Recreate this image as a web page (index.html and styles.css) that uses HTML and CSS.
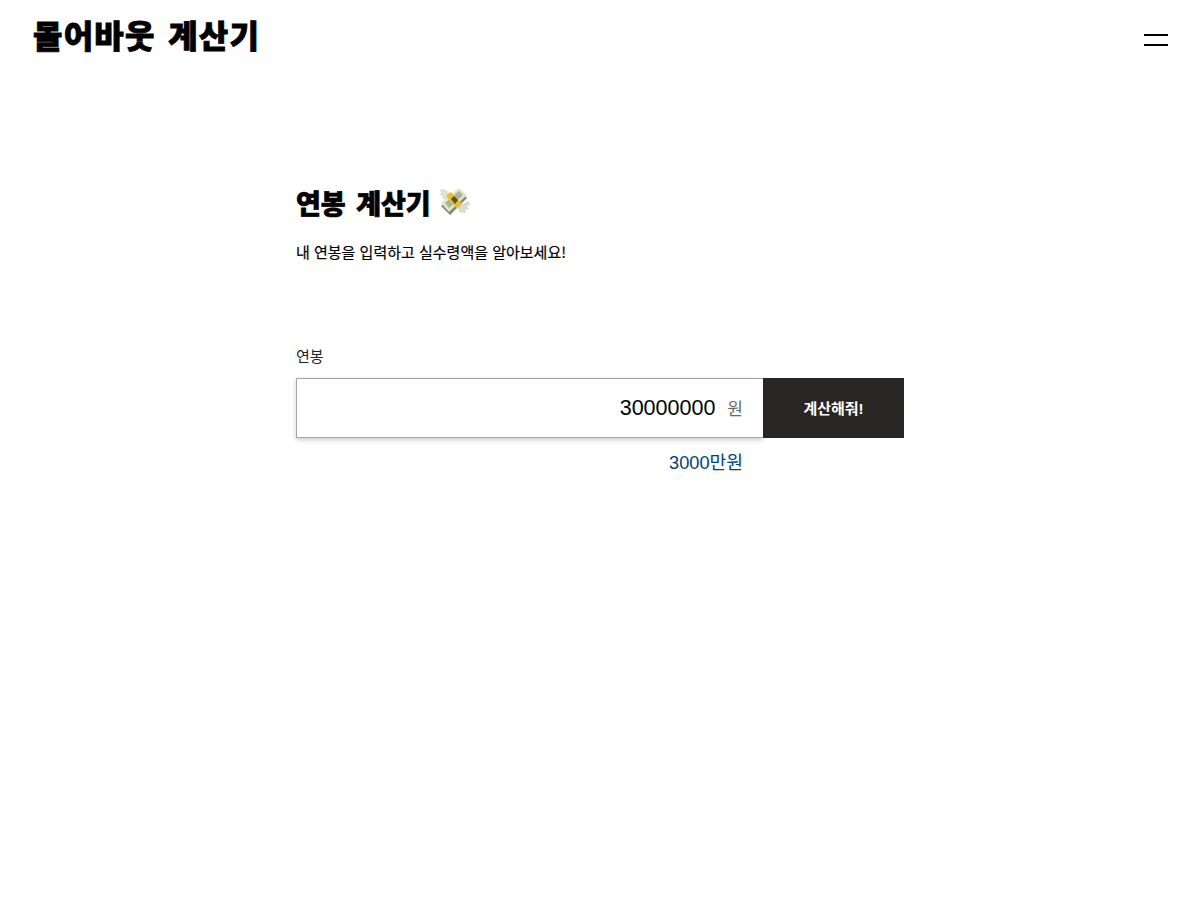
FILE: index.html
```html
<!DOCTYPE html>
<html lang="ko">
<head>
    <meta charset="UTF-8">
    <title>몰어바웃 계산기</title>
    <link rel="stylesheet" href="styles.css">
</head>
<body>
    <header class="site-header">
        <div class="logo">몰어바웃 계산기</div>
        <button class="menu-btn" aria-label="메뉴">
            <span class="menu-line"></span>
            <span class="menu-line"></span>
        </button>
    </header>

    <main class="calculator">
        <h1 class="calc-title">
            연봉 계산기
            <svg class="money-icon" viewBox="0 0 32 32" aria-hidden="true">
                <!-- wings -->
                <path d="M15 9 L6 3 L1 4 L4 7 L1 8 L5 11 L3 12 L10 15 Z" fill="#dfe2d6"/>
                <path d="M20 20 L31 15 L32 19 L29 20 L31 23 L27 24 L28 27 L21 26 Z" fill="#d8dbcc"/>
                <!-- bills -->
                <path d="M3 20 L22 5 L29 12 L12 29 Z" fill="#7f8a70"/>
                <path d="M3 17 L21 2 L29 9 L11 26 Z" fill="#dfe4cc"/>
                <path d="M7 17 L21 5 L25 9 L11 22 Z" fill="#a9b690"/>
                <!-- paper band -->
                <path d="M8 10 L13 6 L24 18 L19 23 Z" fill="#e8bb3a"/>
                <path d="M13 13 L16 10 L20 14 L17 18 Z" fill="#5f5120"/>
            </svg>
        </h1>
        <p class="calc-desc">내 연봉을 입력하고 실수령액을 알아보세요!</p>

        <form class="calc-form">
            <label class="field-label" for="salary">연봉</label>
            <div class="input-row">
                <div class="input-box">
                    <input class="salary-input" id="salary" type="text" value="30000000">
                    <span class="unit">원</span>
                </div>
                <button class="submit-btn" type="button">계산해줘!</button>
            </div>
            <div class="amount-text">3000만원</div>
        </form>
    </main>
</body>
</html>
```

FILE: styles.css
```css
* {
    margin: 0;
    padding: 0;
    box-sizing: border-box;
}

body {
    font-family: "Liberation Sans", "Noto Sans CJK KR", sans-serif;
    background-color: #fff;
    color: #000;
}

.site-header {
    display: flex;
    justify-content: space-between;
    align-items: center;
    height: 74px;
    padding: 0 32px 0 33px;
}

.logo {
    font-size: 32px;
    font-weight: 900;
    line-height: 1;
    letter-spacing: 1.2px;
    word-spacing: 2.5px;
    -webkit-text-stroke: 0.8px #000;
}

.menu-btn {
    display: flex;
    flex-direction: column;
    gap: 8px;
    width: 24px;
    margin-top: 6px;
    background: none;
    border: none;
}

.menu-line {
    display: block;
    height: 2px;
    background-color: #000;
}

.calculator {
    width: 608px;
    margin: 0 auto;
    padding-top: 108px;
}

.calc-title {
    display: flex;
    align-items: center;
    gap: 7px;
    height: 40px;
    font-size: 27px;
    font-weight: 900;
    -webkit-text-stroke: 0.7px #000;
    word-spacing: 3px;
}

.money-icon {
    width: 32px;
    height: 32px;
}

.calc-desc {
    margin-top: 19px;
    font-family: "Noto Sans CJK KR", sans-serif;
    font-size: 15px;
    font-weight: 400;
    line-height: 22px;
    -webkit-text-stroke: 0.2px #000;
}

.calc-form {
    margin-top: 83px;
}

.field-label {
    display: block;
    font-size: 15px;
    line-height: 22px;
    color: #222;
    margin-bottom: 10px;
}

.input-row {
    display: flex;
    height: 60px;
}

.input-box {
    flex: 1;
    display: flex;
    align-items: center;
    padding-right: 20px;
    border: 1px solid #a3a3b0;
    border-right: none;
    box-shadow: 0 2px 5px rgba(0, 0, 0, 0.2);
}

.salary-input {
    flex: 1;
    min-width: 0;
    border: none;
    outline: none;
    text-align: right;
    font-family: inherit;
    font-size: 21.5px;
    color: #000;
}

.unit {
    margin-left: 12px;
    padding-bottom: 2px;
    font-size: 17px;
    color: #666;
}

.submit-btn {
    width: 141px;
    padding-bottom: 2px;
    border: none;
    background-color: #292525;
    color: #fff;
    font-family: inherit;
    font-size: 15px;
    font-weight: 700;
}

.amount-text {
    width: 447px;
    margin-top: 14px;
    text-align: right;
    font-size: 18.2px;
    line-height: 22px;
    color: #00427c;
}
```
